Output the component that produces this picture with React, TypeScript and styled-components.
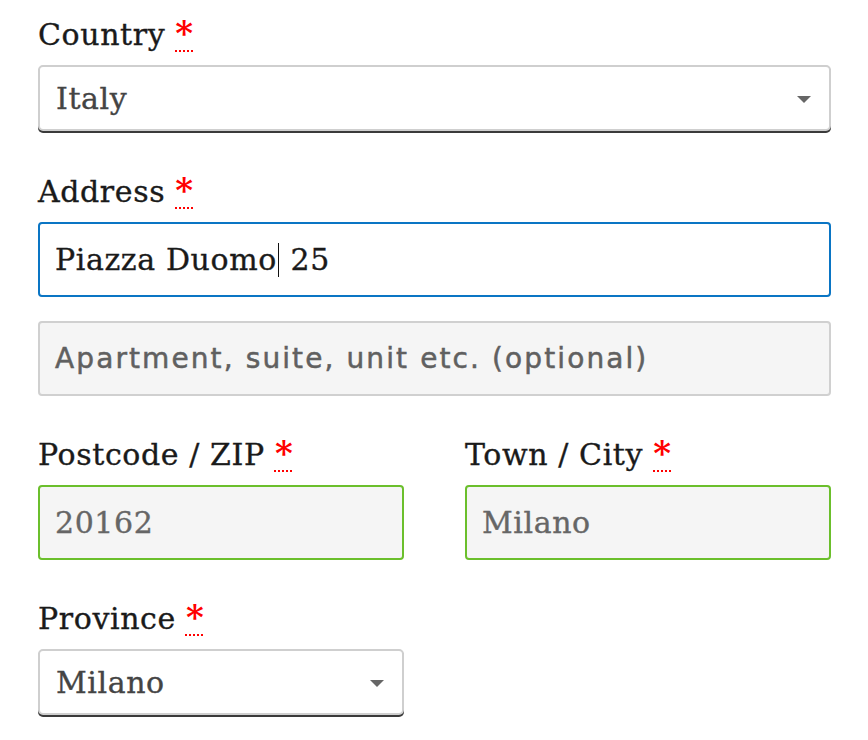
import React from "react";
import styled, { createGlobalStyle } from "styled-components";

const Global = createGlobalStyle`
  html, body { margin: 0; padding: 0; background: #fff; }
  body { font-family: "DejaVu Serif", serif; }
`;

const Form = styled.form`
  width: 793px;
  padding: 12px 0 0 38px;
  display: flex;
  flex-direction: column;
`;

const Field = styled.div<{ $tight?: boolean }>`
  display: flex;
  flex-direction: column;
  margin-bottom: ${(p) => (p.$tight ? "24px" : "36px")};
  min-width: 0;
`;

const Row = styled.div`
  display: grid;
  grid-template-columns: 366px 366px;
  column-gap: 61px;
`;

const Label = styled.label`
  font-family: "DejaVu Serif", serif;
  font-size: 30px;
  line-height: 45px;
  height: 45px;
  color: #1a1a1a;
  margin-bottom: 8px;
  letter-spacing: 0.6px;
  white-space: nowrap;
  -webkit-text-stroke: 0.35px #1a1a1a;
`;

const Req = styled.abbr`
  color: #f00;
  font-weight: 700;
  font-size: 34px;
  line-height: 1;
  letter-spacing: 0;
  -webkit-text-stroke: 0;
  text-decoration: underline dotted #f00;
  text-decoration-thickness: 2px;
  text-underline-offset: 5px;
`;

const SelectBox = styled.div`
  box-sizing: border-box;
  height: 66px;
  border: 2px solid #cfcfcf;
  border-radius: 5px;
  box-shadow: 0 2px 0 #3a3a3a;
  background: #fff;
  display: flex;
  align-items: center;
  justify-content: space-between;
  padding: 0 18px 0 16px;
  font-family: "DejaVu Serif", serif;
  font-size: 30px;
  letter-spacing: 0.6px;
  color: #444;
  -webkit-text-stroke: 0.35px #444;
  margin-bottom: 2px;
`;

const Arrow = styled.span`
  width: 0;
  height: 0;
  border-left: 7px solid transparent;
  border-right: 7px solid transparent;
  border-top: 7px solid #666;
  margin-top: 2px;
`;

const InputBox = styled.div<{ $state?: "focus" | "valid" | "idle" }>`
  box-sizing: border-box;
  height: 75px;
  border: 2px solid
    ${(p) => (p.$state === "focus" ? "#0a75c4" : p.$state === "valid" ? "#6bbf2c" : "#d0d0d0")};
  border-radius: 4px;
  background: ${(p) => (p.$state === "focus" ? "#fff" : "#f5f5f5")};
  display: flex;
  align-items: center;
  padding: 0 15px;
  font-family: "DejaVu Serif", serif;
  font-size: 30px;
  letter-spacing: 0.6px;
  color: ${(p) => (p.$state === "focus" ? "#1a1a1a" : "#666")};
  -webkit-text-stroke: 0.35px ${(p) => (p.$state === "focus" ? "#1a1a1a" : "#666")};
  white-space: pre;
`;

const Placeholder = styled.span`
  font-family: "DejaVu Sans", sans-serif;
  font-size: 28px;
  color: #606060;
  letter-spacing: 2.1px;
  -webkit-text-stroke: 0.5px #606060;
`;

const Caret = styled.span`
  display: inline-block;
  width: 1.5px;
  height: 34px;
  background: #111;
  vertical-align: middle;
  margin: 0 1px;
`;

export default function App() {
  return (
    <>
      <Global />
      <Form>
        <Field>
          <Label>
            Country <Req title="required">*</Req>
          </Label>
          <SelectBox>
            <span>Italy</span>
            <Arrow />
          </SelectBox>
        </Field>
        <Field $tight>
          <Label>
            Address <Req title="required">*</Req>
          </Label>
          <InputBox $state="focus">
            Piazza Duomo<Caret /> 25
          </InputBox>
        </Field>
        <Field>
          <InputBox $state="idle">
            <Placeholder>Apartment, suite, unit etc. (optional)</Placeholder>
          </InputBox>
        </Field>
        <Row>
          <Field>
            <Label>
              Postcode / ZIP <Req title="required">*</Req>
            </Label>
            <InputBox $state="valid">20162</InputBox>
          </Field>
          <Field>
            <Label>
              Town / City <Req title="required">*</Req>
            </Label>
            <InputBox $state="valid">Milano</InputBox>
          </Field>
        </Row>
        <Row>
          <Field>
            <Label>
              Province <Req title="required">*</Req>
            </Label>
            <SelectBox>
              <span>Milano</span>
              <Arrow />
            </SelectBox>
          </Field>
        </Row>
      </Form>
    </>
  );
}
